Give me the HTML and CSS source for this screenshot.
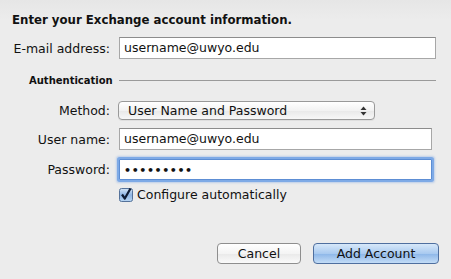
FILE: index.html
```html
<!DOCTYPE html>
<html>
<head>
<meta charset="utf-8">
<link rel="stylesheet" href="styles.css">
</head>
<body>
<div class="sheet">
  <h1 class="title">Enter your Exchange account information.</h1>
  <div class="form">
    <div class="lbl">E-mail address:</div>
    <div class="field wide">username@uwyo.edu</div>

    <div class="section">Authentication</div>
    <div class="rule"></div>

    <div class="lbl">Method:</div>
    <div class="select">
      <span>User Name and Password</span>
      <svg class="arrows" width="7" height="10" viewBox="0 0 7 10"><path d="M3.5 0.5 L6.5 4 L0.5 4 Z" fill="#333"/><path d="M3.5 9.5 L6.5 6 L0.5 6 Z" fill="#333"/></svg>
    </div>

    <div class="lbl">User name:</div>
    <div class="field mid">username@uwyo.edu</div>

    <div class="lbl">Password:</div>
    <div class="field mid focus"><span class="dots">•••••••••</span></div>

    <div></div>
    <div class="check">
      <svg class="box" width="14" height="14" viewBox="0 0 14 14">
        <defs>
          <linearGradient id="cb" x1="0" y1="0" x2="0" y2="1">
            <stop offset="0" stop-color="#d6e6f7"/>
            <stop offset="0.5" stop-color="#8fb5e3"/>
            <stop offset="1" stop-color="#b9d6f3"/>
          </linearGradient>
        </defs>
        <rect x="0.5" y="0.5" width="13" height="13" rx="2" fill="url(#cb)" stroke="#55729a"/>
        <path d="M3 6.5 L5.8 10.5 L11.5 0.5" fill="none" stroke="#0f1c33" stroke-width="2.2" stroke-linejoin="round"/>
      </svg>
      <span>Configure automatically</span>
    </div>
  </div>
  <div class="buttons">
    <div class="btn cancel">Cancel</div>
    <div class="btn primary">Add Account</div>
  </div>
</div>
</body>
</html>
```
FILE: styles.css
```css
html, body {
  margin: 0;
  padding: 0;
}
body {
  width: 451px;
  height: 279px;
  background: linear-gradient(#e6e6e6 0px, #ececec 20px, #ececec 100%);
  font-family: "DejaVu Sans", sans-serif;
  font-size: 12.5px;
  color: #111;
  overflow: hidden;
}
.sheet {
  padding: 12px 15px 0 12px;
}
.title {
  margin: 0;
  font-size: 11.75px;
  line-height: 16px;
  font-weight: bold;
  color: #111;
}
.form {
  margin-top: 9px;
  display: grid;
  grid-template-columns: 98px 1fr;
  grid-template-rows: 22px 26px 19px 22px 23px 14px;
  column-gap: 9px;
  row-gap: 8px;
}
.lbl {
  text-align: right;
  align-self: center;
  white-space: nowrap;
}
.field {
  box-sizing: border-box;
  height: 22px;
  background: #fff;
  border: 1px solid #a7a7a7;
  border-top-color: #8c8c8c;
  padding: 0 4px;
  line-height: 20px;
  white-space: nowrap;
}
.field.mid {
  width: 313px;
}
.field.focus {
  height: 21px;
  margin-top: 1px;
  line-height: 19px;
  border-color: #5d8ed4;
  border-radius: 1px;
  box-shadow: 0 0 0 2px #7eaae6, 0 0 2px 3px rgba(130,170,230,0.45);
}
.dots {
  font-size: 11px;
  letter-spacing: 0.6px;
  font-weight: bold;
}
.section {
  font-size: 10px;
  font-weight: bold;
  padding-left: 17px;
  align-self: center;
  white-space: nowrap;
}
.rule {
  align-self: center;
  height: 1px;
  background: #9a9a9a;
}
.select {
  box-sizing: border-box;
  width: 257px;
  height: 19px;
  margin-left: -1px;
  border: 1px solid #999;
  border-radius: 4px;
  background: linear-gradient(#ffffff, #f2f2f2 50%, #e8e8e8 51%, #f7f7f7);
  display: flex;
  align-items: center;
  justify-content: space-between;
  padding: 0 7px 0 9px;
  box-shadow: 0 1px 0 rgba(0,0,0,0.06);
}
.arrows {
  display: block;
}
.check {
  display: flex;
  align-items: center;
  gap: 4px;
  align-self: center;
  margin-top: -3px;
}
.box {
  display: block;
}
.buttons {
  margin-top: 40px;
  display: flex;
  justify-content: flex-end;
  gap: 12px;
  margin-right: -3px;
}
.btn {
  box-sizing: border-box;
  height: 21px;
  line-height: 19px;
  text-align: center;
  border-radius: 4px;
}
.cancel {
  width: 84px;
  border: 1px solid #8e8e8e;
  background: linear-gradient(#ffffff, #f4f4f4 50%, #e9e9e9 51%, #fafafa);
}
.primary {
  width: 126px;
  border: 1px solid #4f6f9f;
  background: linear-gradient(#d7e8f9, #a9caf0 50%, #8cb6e8 51%, #c3dcf6);
}
```
